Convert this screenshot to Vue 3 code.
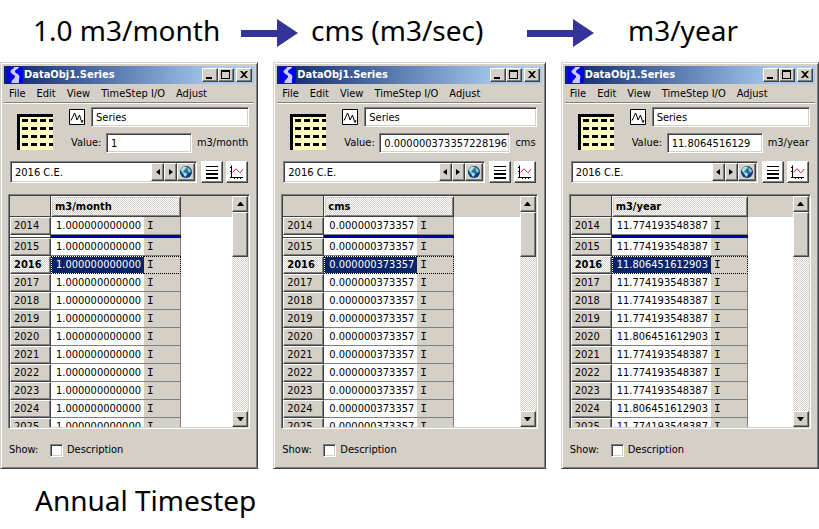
<script setup>
import { reactive } from 'vue'

const years = [2014, 2015, 2016, 2017, 2018, 2019, 2020, 2021, 2022, 2023, 2024, 2025]
const leap = (y) => y % 4 === 0
const menus = ['File', 'Edit', 'View', 'TimeStep I/O', 'Adjust']

const panels = reactive([
  { id: 'month', unit: 'm3/month', value: '1', cell: () => '1.000000000000' },
  { id: 'cms', unit: 'cms', value: '0.000000373357228196', cell: () => '0.000000373357' },
  {
    id: 'year',
    unit: 'm3/year',
    value: '11.8064516129',
    cell: (y) => (leap(y) ? '11.806451612903' : '11.774193548387'),
  },
].map((p) => ({ ...p, name: 'Series', date: '2016 C.E.', description: false })))

const selected = 2016
</script>

<template>
  <main class="page">
    <header class="units">
      <h2 class="unit-a">1.0 m3/month</h2>
      <div class="arrow"><span class="shaft"></span><span class="head"></span></div>
      <h2 class="unit-b">cms (m3/sec)</h2>
      <div class="arrow"><span class="shaft"></span><span class="head"></span></div>
      <h2 class="unit-c">m3/year</h2>
    </header>

    <div class="windows">
      <section v-for="p in panels" :key="p.id" class="window">
        <div class="titlebar">
          <svg class="logo" viewBox="0 0 16 16" aria-hidden="true">
            <rect width="16" height="16" fill="#0000f4" />
            <path d="M7 0h5c0 2-4 2.500-4 4.500 0 2 4.500 2.500 4.500 5 0 2-1 3-.500 6.500H4.500C4 13 8 11.500 8 9.500 8 7.500 3.500 7 3.500 4.500 3.500 2.500 7 2 7 0z" fill="#c8ccff" />
          </svg>
          <h3>DataObj1.Series</h3>
          <button class="cap" aria-label="Minimize">
            <svg viewBox="0 0 12 10"><path d="M2 7h6v2H2z" /></svg>
          </button>
          <button class="cap" aria-label="Maximize">
            <svg viewBox="0 0 12 10"><path d="M1 0h9v9H1zM2 2v6h7V2z" fill-rule="evenodd" /></svg>
          </button>
          <button class="cap close" aria-label="Close">
            <svg viewBox="0 0 12 10"><path d="M2 1h2l2 2 2-2h2L7 4.500 10 8H8L6 6 4 8H2l3-3.500z" /></svg>
          </button>
        </div>

        <nav class="menubar">
          <button v-for="m in menus" :key="m">{{ m }}</button>
        </nav>

        <div class="slot">
          <svg class="slot-icon" viewBox="0 0 36 36" aria-hidden="true">
            <rect width="36" height="36" fill="#ffffc0" />
            <path d="M0 0h36v3H3v33H0z" />
            <path d="M5 6.500h31M5 14.500h31M5 22.500h31M5 30.500h31" stroke="#000" stroke-width="3" stroke-dasharray="6 3" />
          </svg>
          <div class="fields">
            <div class="field">
              <svg class="series-icon" viewBox="0 0 16 16" aria-hidden="true">
                <path d="M.5.5h15v15H.5z" fill="#fff" stroke="#000" />
                <path d="M2 11.500l1.500-3 2-4.500 1 2 1.500 5 2.500-5 1.500 5 1 2.500 1-2.500" fill="none" stroke="#000" />
              </svg>
              <input v-model="p.name" class="sunken" aria-label="Slot name" />
            </div>
            <div class="field">
              <label class="value-label" :for="'value-' + p.id">Value:</label>
              <input :id="'value-' + p.id" v-model="p.value" class="sunken" />
              <span class="unit">{{ p.unit }}</span>
            </div>
          </div>
        </div>

        <div class="toolbar">
          <div class="datebox sunken">
            <input v-model="p.date" aria-label="Timestep" />
            <button class="raised step" aria-label="Previous timestep">
              <svg viewBox="0 0 4 6"><path d="M4 0v6L0 3z" /></svg>
            </button>
            <button class="raised step" aria-label="Next timestep">
              <svg viewBox="0 0 4 6"><path d="M0 0v6l4-3z" /></svg>
            </button>
            <button class="raised globe" aria-label="Go to current timestep">
              <svg viewBox="0 0 12 12">
                <circle cx="6" cy="6" r="6" fill="#0c3c78" />
                <circle cx="5.500" cy="5" r="4" fill="#2470ac" />
                <path d="M1 3l2-2 3-.500 1 1.500-2 1-.500 1.500L3 5l1 1.500 2 .500 1 1.500L5.500 11 4 9.500 3 7 1 5z" fill="#b4dcd8" />
                <path d="M8 1.500l2 1.500 1 2-1 2-1.500-1.500L7.500 4z" fill="#8cc4c0" />
              </svg>
            </button>
          </div>
          <button class="raised tool" aria-label="Row display">
            <svg viewBox="0 0 18 18"><path d="M3 3h12v1H3zM3 7h12v1H3zM3 10h12v2H3zM3 14h12v2H3z" /></svg>
          </button>
          <button class="raised tool" aria-label="Plot">
            <svg viewBox="0 0 18 18">
              <path d="M3.500 2.500v12.500M2 4.500h2M2 8.500h2M2 14.500h13M6.500 14v2M9.500 14v2M12.500 14v2" fill="none" stroke="#000" />
              <path d="M5 9.500l2.500-3.500h1l3 3.500h1l2.500-3.500" fill="none" stroke="#d02030" />
            </svg>
          </button>
        </div>

        <div class="frame">
          <div class="sheet">
            <table>
              <thead>
                <tr>
                  <td class="corner"></td>
                  <th class="colhead" colspan="2" scope="col">{{ p.unit }}</th>
                </tr>
              </thead>
              <tbody>
                <template v-for="y in years" :key="y">
                  <tr :class="{ selected: y === selected }">
                    <th class="rowhead" scope="row">{{ y }}</th>
                    <td class="num">{{ p.cell(y) }}</td>
                    <td class="flag">I</td>
                  </tr>
                  <tr v-if="y === 2014" class="divider" aria-hidden="true">
                    <td></td>
                    <td colspan="2"></td>
                  </tr>
                </template>
              </tbody>
            </table>
          </div>
          <div class="scrollbar">
            <button class="raised" aria-label="Scroll up">
              <svg viewBox="0 0 7 4"><path d="M3 0h1l3 4H0z" /></svg>
            </button>
            <div class="raised thumb"></div>
            <button class="raised down" aria-label="Scroll down">
              <svg viewBox="0 0 7 4"><path d="M0 0h7L4 4H3z" /></svg>
            </button>
          </div>
        </div>

        <div class="show">
          <span class="show-label">Show:</span>
          <label><input v-model="p.description" type="checkbox" />Description</label>
        </div>
      </section>
    </div>

    <footer class="caption">Annual Timestep</footer>
  </main>
</template>

<style>
body {
  margin: 0;
  background: #fff;
}
</style>

<style scoped>
.page {
  font: 11px/14px 'DejaVu Sans Condensed', 'DejaVu Sans', sans-serif;
  color: #000;
}
.page * {
  box-sizing: border-box;
}
button,
input {
  font: inherit;
  color: inherit;
  margin: 0;
  padding: 0;
  border: 0;
  border-radius: 0;
  outline: 0;
}
button {
  display: flex;
  align-items: center;
  justify-content: center;
  flex: none;
  background: #d4d0c8;
}
svg {
  display: block;
  flex: none;
}

.units {
  display: grid;
  grid-template-columns: 241fr 57fr 229fr 67fr 225fr;
  align-items: center;
  height: 62px;
  padding-bottom: 2px;
}
.units h2,
.caption {
  margin: 0;
  font: 28px/36px 'Noto Sans', sans-serif;
  white-space: nowrap;
}
.unit-a { padding-left: 33px; }
.unit-b { padding-left: 13px; }
.unit-c { padding-left: 34px; }
.arrow {
  display: flex;
  align-items: center;
  padding-top: 6px;
}
.shaft {
  flex: 1;
  height: 7px;
  background: #333399;
}
.head {
  border: solid transparent;
  border-width: 14px 0 14px 21px;
  border-left-color: #333399;
}

.windows {
  display: grid;
  grid-template-columns: 258fr 272fr 258fr;
  gap: 15px;
}
.window {
  min-width: 0;
  padding: 3px;
  background: #d4d0c8;
  border: 1px solid;
  border-color: #d4d0c8 #404040 #404040 #d4d0c8;
  box-shadow: inset 1px 1px #fff, inset -1px -1px #808080;
}

.titlebar {
  display: flex;
  align-items: center;
  height: 18px;
  padding: 0 2px 0 3px;
  background: linear-gradient(90deg, #0a246a, #a6caf0 85%);
}
.logo {
  width: 16px;
  height: 16px;
}
h3 {
  flex: 1;
  margin: 0 0 0 1px;
  font-size: 11px;
  line-height: 14px;
  color: #fff;
}
.cap,
.raised {
  border: 1px solid;
  border-color: #fff #404040 #404040 #fff;
  box-shadow: inset -1px -1px #808080;
}
.cap {
  width: 16px;
  height: 14px;
}
.cap svg {
  width: 12px;
  height: 10px;
}
.close {
  margin-left: 2px;
}

.menubar {
  display: flex;
  gap: 11px;
  height: 20px;
  padding: 2px 5px 0;
  border-bottom: 1px solid #fff;
  box-shadow: inset 0 -1px #808080;
}
.menubar button {
  height: 15px;
}

.slot {
  display: flex;
  align-items: flex-start;
  gap: 16px;
  padding: 3px 5px 0 13px;
}
.slot-icon {
  width: 36px;
  height: 36px;
  margin-top: 7px;
}
.fields {
  display: grid;
  grid-template-columns: minmax(0, 1fr);
  flex: 1;
  gap: 6px;
  min-width: 0;
}
.field {
  display: flex;
  align-items: center;
}
.series-icon {
  width: 16px;
  height: 16px;
  margin-right: 6px;
}
.sunken {
  min-width: 0;
  flex: 1;
  background: #fff;
  border: 1px solid;
  border-color: #808080 #fff #fff #808080;
  box-shadow: inset 1px 1px #404040, inset -1px -1px #d4d0c8;
}
input.sunken {
  height: 20px;
  padding: 1px 0 0 4px;
}
.value-label {
  flex: none;
  width: 37px;
  padding-left: 2px;
}
.unit {
  padding: 0 1px 0 5px;
}

.toolbar {
  display: flex;
  padding: 8px 6px 0;
}
.datebox {
  display: flex;
  height: 22px;
  padding: 1px;
  margin-right: 4px;
}
.datebox input {
  flex: 1;
  min-width: 0;
  padding: 1px 3px 0;
  background: transparent;
}
.step {
  width: 13px;
}
.step svg {
  width: 4px;
  height: 6px;
}
.globe {
  width: 18px;
}
.globe svg {
  width: 12px;
  height: 12px;
}
.tool {
  width: 22px;
  height: 22px;
  background: #fff;
}
.tool + .tool {
  margin-left: 3px;
}
.tool svg {
  width: 18px;
  height: 18px;
}

.frame {
  display: flex;
  height: 235px;
  margin: 11px 4px 0;
  padding: 1px;
  border: 1px solid;
  border-color: #808080 #fff #fff #808080;
  box-shadow: inset 1px 1px #404040, inset -1px -1px #d4d0c8;
}
.sheet {
  flex: 1;
  min-width: 0;
  overflow: hidden;
  background: linear-gradient(#d4d0c8 21px, #fff 21px);
}
table {
  border-collapse: separate;
  border-spacing: 0;
}
th,
td {
  padding: 0;
  line-height: 14px;
  text-align: left;
}
.corner {
  width: 41px;
  min-width: 41px;
  border: solid #404040;
  border-width: 0 1px 1px 0;
}
.colhead {
  height: 21px;
  padding: 1px 3px 0;
  border: 1px solid;
  border-color: #fff #404040 #404040 #fff;
  box-shadow: inset 1px 1px #d4d0c8, inset -1px -1px #808080;
}
.rowhead {
  height: 18px;
  padding: 0 3px;
  font-weight: normal;
  background: #d4d0c8;
  border: 1px solid;
  border-color: #fff #404040 #404040 #fff;
  box-shadow: inset -1px -1px #808080;
}
.colhead,
.selected .rowhead,
.scrollbar {
  background: repeating-conic-gradient(#d4d0c8 0 25%, #fff 0 50%) 0 0 / 2px 2px;
}
.selected .rowhead {
  font-weight: bold;
}
.num {
  padding: 1px 3px 0 5px;
  text-align: right;
  border-bottom: 1px solid #808080;
}
.flag {
  width: 37px;
  min-width: 37px;
  padding: 1px 3px 0;
  font-family: 'DejaVu Sans Mono', monospace;
  background: #d4d0c8;
  border: solid #808080;
  border-width: 0 1px 1px 0;
}
.selected .num,
.selected .flag {
  padding-top: 0;
  border-top: 1px dotted #000;
  border-bottom: 1px dotted #000;
}
.selected .num {
  padding-left: 4px;
  color: #fff;
  border-left: 1px dotted #000;
  background: linear-gradient(#0a246a, #0a246a) padding-box, #fff;
}
.selected .flag {
  border-right: 1px dotted #000;
}
.divider td {
  height: 3px;
  background: #0000a8;
}
.divider td:first-child {
  background: #fff;
  border: solid #404040;
  border-width: 0 1px 1px 0;
}

.scrollbar {
  display: flex;
  flex-direction: column;
  width: 16px;
}
.scrollbar button {
  width: 16px;
  height: 16px;
}
.scrollbar svg {
  width: 7px;
  height: 4px;
}
.thumb {
  height: 45px;
  background: #d4d0c8;
}
.down {
  margin-top: auto;
}

.show {
  display: flex;
  align-items: center;
  height: 36px;
  padding: 6px 5px 0;
}
.show-label {
  width: 41px;
}
.show label {
  display: flex;
  align-items: center;
  gap: 4px;
}
.show input {
  appearance: none;
  width: 13px;
  height: 13px;
  background: #fff;
  border: 1px solid;
  border-color: #808080 #fff #fff #808080;
  box-shadow: inset 1px 1px #404040, inset -1px -1px #d4d0c8;
}

.caption {
  padding: 13px 0 0 35px;
}
</style>
